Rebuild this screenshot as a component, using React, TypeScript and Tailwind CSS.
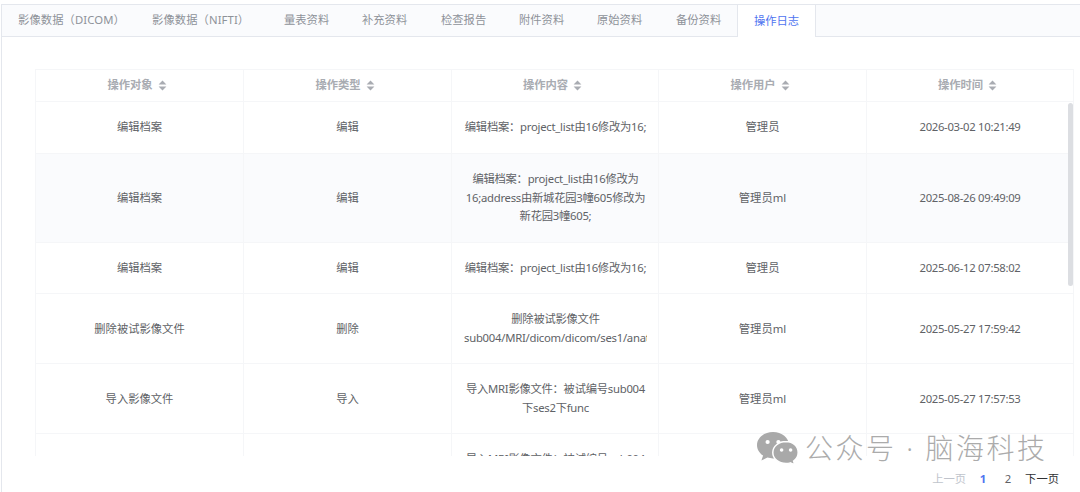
import { Fragment } from "react";

const TABS = [
  { label: "影像数据（DICOM）", cls: "w-[134px] pl-[16px] tracking-[0.1px]" },
  { label: "影像数据（NIFTI）", cls: "w-[131px] pl-[16px] tracking-[0.1px]" },
  { label: "量表资料", cls: "w-[78px] pl-[17px]" },
  { label: "补充资料", cls: "w-[79px] pl-[17px]" },
  { label: "检查报告", cls: "w-[78px] pl-[17px]" },
  { label: "附件资料", cls: "w-[78px] pl-[17px]" },
  { label: "原始资料", cls: "w-[79px] pl-[17px]" },
  { label: "备份资料", cls: "w-[78px] pl-[17px]" },
];

const HEADERS = ["操作对象", "操作类型", "操作内容", "操作用户", "操作时间"];

const ROWS = [
  { h: "h-[52px]", target: "编辑档案", type: "编辑", lines: ["编辑档案：project_list由16修改为16;"], user: "管理员", time: "2026-03-02 10:21:49" },
  { h: "h-[89px]", target: "编辑档案", type: "编辑", lines: ["编辑档案：project_list由16修改为", "16;address由新城花园3幢605修改为", "新花园3幢605;"], user: "管理员ml", time: "2025-08-26 09:49:09", striped: true },
  { h: "h-[51px]", target: "编辑档案", type: "编辑", lines: ["编辑档案：project_list由16修改为16;"], user: "管理员", time: "2025-06-12 07:58:02" },
  { h: "h-[70px] pt-[1px]", target: "删除被试影像文件", type: "删除", lines: ["删除被试影像文件", "sub004/MRI/dicom/dicom/ses1/anat/"], user: "管理员ml", time: "2025-05-27 17:59:42" },
  { h: "h-[70px] pt-[1px]", target: "导入影像文件", type: "导入", lines: ["导入MRI影像文件：被试编号sub004", "下ses2下func"], user: "管理员ml", time: "2025-05-27 17:57:53" },
  { h: "h-[70px] pt-[1px]", target: "导入影像文件", type: "导入", lines: ["导入MRI影像文件：被试编号sub004", "下ses2下func"], user: "管理员ml", time: "2025-05-27 17:57:50" },
];

const SortIcon = () => (
  <svg viewBox="0 0 9 11" className="ml-[5px] mr-[5px] inline-block h-[11px] w-[9px] fill-[#a9acb2]">
    <path d="M4.5 0.6 L8.4 4.6 H0.6 Z" />
    <path d="M4.5 10.4 L8.4 6.4 H0.6 Z" />
  </svg>
);

const WeChatMark = () => (
  <svg viewBox="0 0 42 33" className="h-[33px] w-[42px]">
    <path
      d="M16 0C7.2 0 0 5.9 0 13.2c0 4.2 2.4 7.900 6.100 10.400L4.400 28.600l6-3c1.800.5 3.700.8 5.600.8 8.800 0 16-5.900 16-13.200S24.800 0 16 0Z"
      fill="#a9a9a9"
    />
    <circle cx="10.600" cy="10" r="2.100" fill="#fff" />
    <circle cx="21.400" cy="10" r="2.100" fill="#fff" />
    <path
      d="M29 9.500c-7.300 0-13.200 4.900-13.200 11s5.900 11 13.200 11c1.500 0 2.900-.2 4.300-.6l4.500 2.100-1.200-3.900c2.800-2 4.600-5.100 4.600-8.600 0-6.100-5-11-12.200-11Z"
      fill="#a9a9a9"
      stroke="#fff"
      strokeWidth="1.500"
    />
    <circle cx="24.600" cy="18" r="1.800" fill="#fff" />
    <circle cx="33.600" cy="18" r="1.800" fill="#fff" />
  </svg>
);

export default function App() {
  return (
    <div className="relative h-[492px] w-[1080px] overflow-hidden bg-white pl-[1px] pt-[4px] text-[11.3px] text-[#606266] [font-family:'Noto_Sans','Noto_Sans_CJK_SC',sans-serif]">
      <div className="h-[488px] border-l border-t border-[#e4e7ed]">
        {/* Tabs */}
        <div className="flex h-[32px] border-b border-[#e4e7ed] bg-[#fafbfd]">
          {TABS.map((t) => (
            <div key={t.label} className={`${t.cls} flex items-center whitespace-nowrap text-[#8e9299]`}>
              {t.label}
            </div>
          ))}
          <div className="-mb-px flex w-[79px] items-center justify-center border-x border-[#e4e7ed] bg-white text-[#4f74f0]">
            操作日志
          </div>
        </div>

        {/* Table */}
        <div className="ml-[33px] mt-[32px] h-[387px] w-[1039px] overflow-hidden border-l border-t border-[#f5f6f8]">
          <div className="grid grid-cols-[208px_208px_207px_208px_207px]">
            {HEADERS.map((h) => (
              <div key={h} className="flex h-[32px] items-center justify-center border-b border-r border-[#f5f6f8] font-semibold text-[#a9acb2]">
                {h}
                <SortIcon />
              </div>
            ))}
            {ROWS.map((r, i) => {
              const cell = `${r.h} flex items-center justify-center border-b border-r border-[#f5f6f8] ${r.striped ? "bg-[#fafbfd]" : ""}`;
              return (
                <Fragment key={i}>
                  <div className={cell}>{r.target}</div>
                  <div className={cell}>{r.type}</div>
                  <div className={`${cell} flex-col pl-[12px] pr-[11px] text-center leading-[18.7px] tracking-[-0.25px]`}>
                    {r.lines.map((l) => (
                      <div key={l} className="w-full overflow-hidden whitespace-nowrap">
                        {l}
                      </div>
                    ))}
                  </div>
                  <div className={cell}>{r.user}</div>
                  <div className={`${cell} tracking-[-0.3px]`}>{r.time}</div>
                </Fragment>
              );
            })}
          </div>
        </div>

        {/* Pagination */}
        <div className="mt-[14px] flex h-[18px] items-center justify-end pr-[21px]">
          <span className="text-[#c0c4cc]">上一页</span>
          <span className="ml-[13px] w-[8px] text-center font-bold text-[#4f74f0]">1</span>
          <span className="ml-[17px] w-[8px] text-center">2</span>
          <span className="ml-[13px] text-[#303133]">下一页</span>
        </div>
      </div>

      {/* Scrollbar */}
      <div className="absolute left-[1068px] top-[103px] h-[183px] w-[5px] rounded-full bg-[#dcdee2]" />

      {/* Watermark */}
      <div className="absolute left-[757px] top-[432px] flex items-center">
        <WeChatMark />
        <span className="ml-[6px] whitespace-nowrap text-[28px] font-light leading-[33px] tracking-[2.5px] text-[#ababab]">公众号 · 脑海科技</span>
      </div>
    </div>
  );
}
